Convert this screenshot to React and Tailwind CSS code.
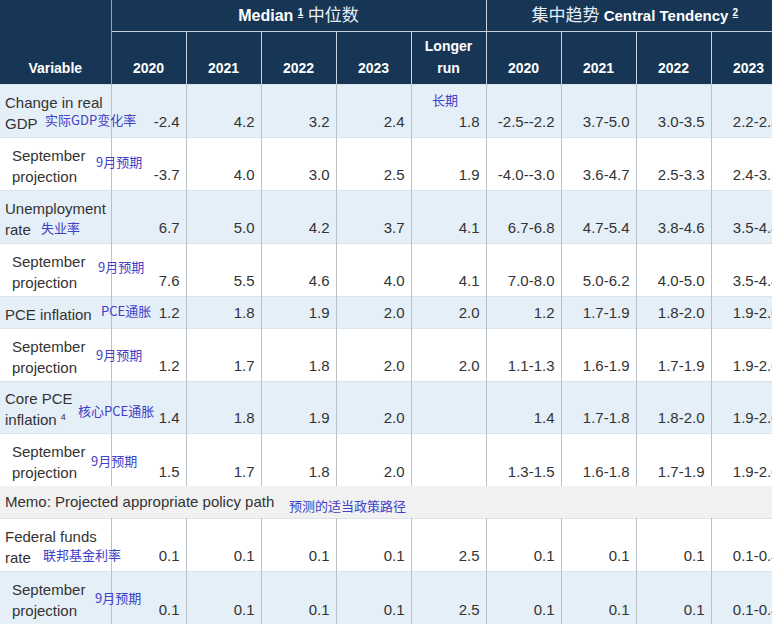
import React from "react";

const rows = [
  { l: ["Change in real", "GDP"], v: ["-2.4","4.2","3.2","2.4","1.8","-2.5--2.2","3.7-5.0","3.0-3.5","2.2-2.8"], bg: "bg-[#e5eff8]", h: "h-[53px]" },
  { l: ["September", "projection"], ind: true, v: ["-3.7","4.0","3.0","2.5","1.9","-4.0--3.0","3.6-4.7","2.5-3.3","2.4-3.3"], bg: "bg-white", h: "h-[53px]" },
  { l: ["Unemployment", "rate"], v: ["6.7","5.0","4.2","3.7","4.1","6.7-6.8","4.7-5.4","3.8-4.6","3.5-4.4"], bg: "bg-[#e5eff8]", h: "h-[53px]" },
  { l: ["September", "projection"], ind: true, v: ["7.6","5.5","4.6","4.0","4.1","7.0-8.0","5.0-6.2","4.0-5.0","3.5-4.4"], bg: "bg-white", h: "h-[53px]" },
  { l: ["PCE inflation"], v: ["1.2","1.8","1.9","2.0","2.0","1.2","1.7-1.9","1.8-2.0","1.9-2.0"], bg: "bg-[#e5eff8]", h: "h-[32px]" },
  { l: ["September", "projection"], ind: true, v: ["1.2","1.7","1.8","2.0","2.0","1.1-1.3","1.6-1.9","1.7-1.9","1.9-2.0"], bg: "bg-white", h: "h-[53px]" },
  { l: ["Core PCE", "inflation"], sup: "4", v: ["1.4","1.8","1.9","2.0","","1.4","1.7-1.8","1.8-2.0","1.9-2.0"], bg: "bg-[#e5eff8]", h: "h-[52px]" },
  { l: ["September", "projection"], ind: true, v: ["1.5","1.7","1.8","2.0","","1.3-1.5","1.6-1.8","1.7-1.9","1.9-2.0"], bg: "bg-white", h: "h-[53px]" },
  { memo: true },
  { l: ["Federal funds", "rate"], v: ["0.1","0.1","0.1","0.1","2.5","0.1","0.1","0.1","0.1-0.4"], bg: "bg-white", h: "h-[53px]" },
  { l: ["September", "projection"], ind: true, v: ["0.1","0.1","0.1","0.1","2.5","0.1","0.1","0.1","0.1-0.4"], bg: "bg-[#e5eff8]", h: "h-[53px]" },
];

const notes = [
  ["实际GDP变化率", 45, 111], ["9月预期", 96, 153], ["长期", 432, 91], ["失业率", 41, 219],
  ["9月预期", 98, 258], ["PCE通胀", 101, 302], ["9月预期", 96, 346], ["核心PCE通胀", 78, 402],
  ["9月预期", 91, 452], ["预测的适当政策路径", 289, 497], ["联邦基金利率", 43, 546], ["9月预期", 95, 589],
];

const cols = ["2020","2021","2022","2023"];

export default function App() {
  return (
    <div className="relative w-[772px] h-[626px] overflow-hidden bg-white" style={{ fontFamily: '"Liberation Sans", Arial, "Noto Sans CJK SC", sans-serif' }}>
      <table className="table-fixed border-collapse w-[786px] text-[15px] text-[#333]">
        <colgroup>
          <col className="w-[111px]" />
          {Array.from({ length: 9 }).map((_, i) => <col key={i} className="w-[75px]" />)}
        </colgroup>
        <thead className="bg-[#173656] text-white font-bold text-[14px]">
          <tr className="h-[31px]">
            <th rowSpan={2} className="align-bottom pb-[5px] border-r border-[#8fa3b8]">Variable</th>
            <th colSpan={5} className="border-r border-b border-[#c8d2dc] text-center font-bold text-[16px]">
              Median <sup className="text-[10px] underline">1</sup> <span className="font-normal text-[17px] text-[#e8eef4]">中位数</span>
            </th>
            <th colSpan={4} className="border-b border-[#c8d2dc] text-left pl-[45px] text-[15px]">
              <span className="font-normal text-[17px] text-[#e8eef4]">集中趋势</span> Central Tendency <sup className="text-[10px] underline">2</sup>
            </th>
          </tr>
          <tr className="h-[53px]">
            {[...cols, null, ...cols].map((c, i) => (
              <th key={i} className="align-bottom pb-[5px] border-r border-[#c8d2dc] leading-[22px]">
                {c ?? <>Longer<br />run</>}
              </th>
            ))}
          </tr>
        </thead>
        <tbody>
          {rows.map((r, i) =>
            r.memo ? (
              <tr key={i} className="h-[32px] bg-[#f1f1f1]">
                <td colSpan={10} className="pl-[5px] text-[15px] align-middle">Memo: Projected appropriate policy path</td>
              </tr>
            ) : (
              <tr key={i} className={`${r.h} ${r.bg} border-t border-[#dde3ea]`}>
                <td className={`align-bottom pb-[3px] leading-[21px] text-[15px] border-r border-[#b8c0c8] ${r.ind ? "pl-[12px]" : "pl-[5px]"}`}>
                  {r.l.map((t, j) => (
                    <div key={j} className="whitespace-nowrap">{t}{r.sup && j === 1 ? <sup className="text-[9px] ml-1">{r.sup}</sup> : null}</div>
                  ))}
                </td>
                {r.v.map((v, j) => (
                  <td key={j} className="align-bottom pb-[3px] text-right pr-[6px] border-r border-[#b8c0c8] whitespace-nowrap">{v}</td>
                ))}
              </tr>
            )
          )}
        </tbody>
      </table>
      {notes.map(([t, x, y], i) => (
        <span key={i} className="absolute text-[13px] leading-[18px] text-[#4040c8] whitespace-nowrap" style={{ left: x, top: y, fontFamily: '"Noto Sans CJK SC", sans-serif' }}>{t}</span>
      ))}
    </div>
  );
}
